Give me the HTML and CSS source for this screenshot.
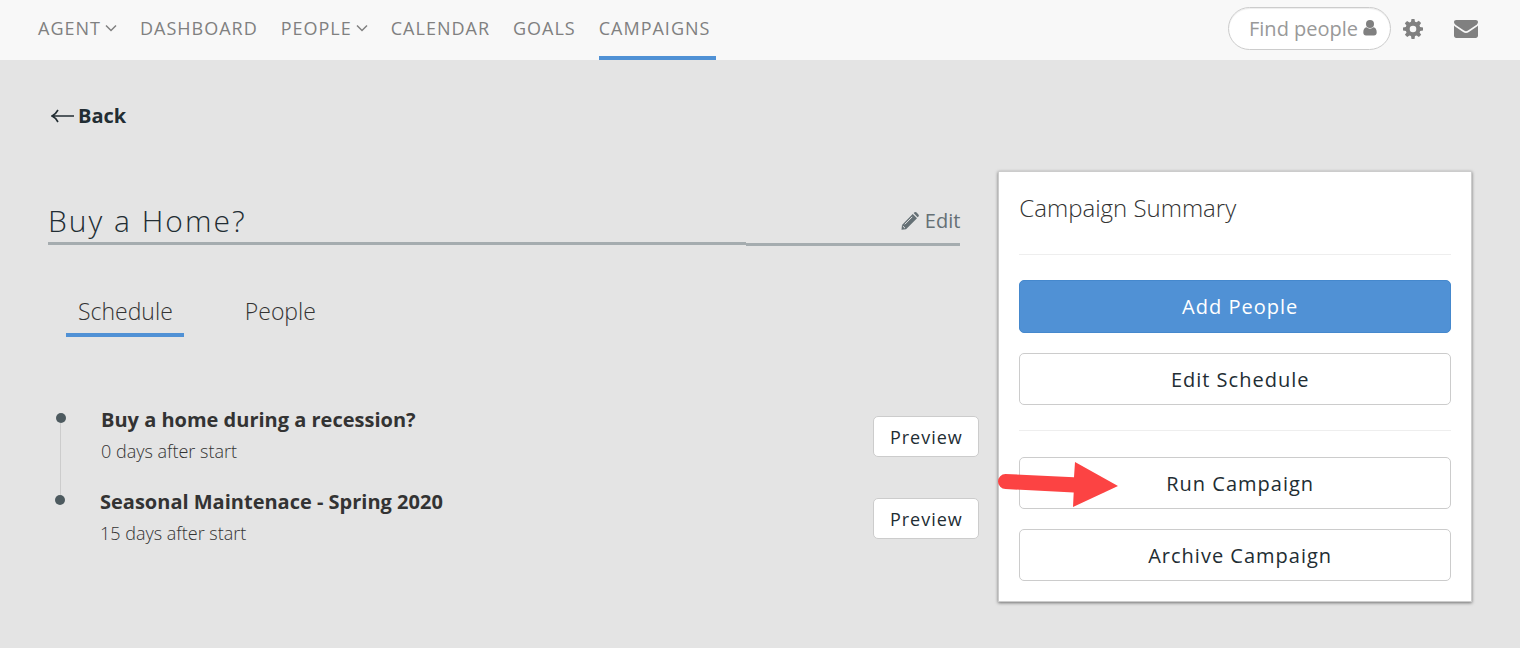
FILE: index.html
```
<!DOCTYPE html>
<html lang="en">
<head>
  <meta charset="UTF-8">
  <meta name="viewport" content="width=device-width, initial-scale=1.0">
  <title>Buy a Home? - Campaigns</title>
  <link rel="stylesheet" href="styles.css">
</head>
<body>
  <header class="navbar">
    <nav class="nav-links">
      <a href="#">AGENT
        <svg class="caret" viewBox="0 0 12 8"><path d="M1 1.5l5 5 5-5"/></svg>
      </a>
      <a href="#">DASHBOARD</a>
      <a href="#">PEOPLE
        <svg class="caret" viewBox="0 0 12 8"><path d="M1 1.5l5 5 5-5"/></svg>
      </a>
      <a href="#">CALENDAR</a>
      <a href="#">GOALS</a>
      <a href="#" class="active">CAMPAIGNS</a>
    </nav>
    <div class="nav-tools">
      <div class="search">
        <input type="text" placeholder="Find people" aria-label="Find people">
        <svg class="user-icon" viewBox="0 0 14 16"><circle cx="7" cy="4" r="4"/><path d="M3.6 7.3C1.200 7.600.3 9.800.3 12.600.3 14.600 1.400 15.600 3 15.600h8c1.600 0 2.700-1 2.700-3 0-2.800-.9-5-3.300-5.300a4.700 4.700 0 0 1-6.800 0z"/></svg>
      </div>
      <a href="#" class="gear" aria-label="Settings">
        <svg viewBox="0 0 20 20"><path fill-rule="evenodd" d="M8.500 0h3l.5 2.700 1.500.6L15.800 1.800l2.300 2.300-1.600 2.300.6 1.500 2.900.6v3l-2.800.5-.6 1.500 1.600 2.300-2.300 2.300-2.300-1.600-1.600.6-.5 2.900h-3L8 17.100l-1.500-.6-2.300 1.600-2.300-2.300 1.600-2.300-.6-1.500L0 11.500v-3l2.800-.5.6-1.600-1.600-2.200 2.300-2.300L6.500 3.400 8 2.800zM10 6.700a3.300 3.300 0 1 0 0 6.600 3.300 3.300 0 0 0 0-6.600z"/></svg>
      </a>
      <a href="#" class="mail" aria-label="Messages">
        <svg viewBox="0 0 24 18"><path d="M2.200 0h19.600C23 0 24 .8 24 1.900c0 1.300-.9 2.500-2.100 3.300L14 10.600c-1.300.9-2.700.9-4 0L2.100 5.200C.9 4.400 0 3.300 0 2 0 .8.9 0 2.200 0zM0 5.500c.4.500.9.900 1.400 1.200l7.700 5.200c1.900 1.300 3.900 1.300 5.800 0l7.700-5.200c.5-.3 1-.7 1.400-1.200v10.300c0 1.200-1 2.200-2.200 2.200H2.200C1 18 0 17 0 15.800z"/></svg>
      </a>
    </div>
  </header>

  <main>
    <a href="#" class="back">
      <svg viewBox="0 0 24 14"><path d="M7 1Q4.500 5.500 1 7q3.500 1.500 6 6M1.500 7H23"/></svg>Back
    </a>

    <div class="columns">
      <section class="campaign">
        <div class="title-row">
          <h1>Buy a Home?</h1>
          <a href="#" class="edit">
            <svg viewBox="0 0 18 18"><path d="M12.600 1l1-.7c.7-.5 1.400-.3 2 .3l1.800 1.800c.6.6.6 1.300.1 2l-.9.9zM11.700 1.900l4.300 4.300L5 17.200.5 17.700 1 12.900z"/><path class="cut" d="M3.800 12.300l7.500-7.500M1.800 14l2.200 2.200"/></svg>
            Edit
          </a>
        </div>

        <div class="tabs">
          <a href="#" class="tab active">Schedule</a>
          <a href="#" class="tab">People</a>
        </div>

        <ul class="timeline">
          <li>
            <div class="step">
              <h3>Buy a home during a recession?</h3>
              <p>0 days after start</p>
            </div>
            <button class="preview">Preview</button>
          </li>
          <li>
            <div class="step">
              <h3>Seasonal Maintenace - Spring 2020</h3>
              <p>15 days after start</p>
            </div>
            <button class="preview">Preview</button>
          </li>
        </ul>
      </section>

      <aside class="summary">
        <h2>Campaign Summary</h2>
        <hr>
        <div class="actions">
          <button class="btn primary">Add People</button>
          <button class="btn">Edit Schedule</button>
        </div>
        <hr>
        <div class="actions">
          <button class="btn">Run Campaign</button>
          <button class="btn">Archive Campaign</button>
          <svg class="arrow" viewBox="0 0 120 46"><path d="M7.500 12L76 15.200 77 0l43 24-45 21 .7-14.500L7.500 27a7.500 7.500 0 0 1 0-15z"/></svg>
        </div>
      </aside>
    </div>
  </main>
</body>
</html>
```
FILE: styles.css
```
* {
  box-sizing: border-box;
}

body {
  margin: 0;
  background-color: #e4e4e4;
  color: #333;
  font-family: "Open Sans", sans-serif;
  font-weight: 300;
}

a {
  color: inherit;
  text-decoration: none;
}

h1, h2, h3, p, ul {
  margin: 0;
  padding: 0;
}

button {
  font-family: inherit;
  font-weight: 400;
  letter-spacing: 1px;
  color: #222d33;
  background-color: white;
  border: 1px solid #ccc;
  border-radius: 5px;
  cursor: pointer;
}

/* Top bar */
.navbar {
  display: flex;
  justify-content: space-between;
  height: 60px;
  padding: 0 42px 0 38px;
  background-color: #f8f8f8;
  color: #808080;
}

.nav-links {
  display: flex;
  gap: 23px;
}

.nav-links a {
  display: flex;
  align-items: center;
  gap: 4px;
  font-size: 18px;
  font-weight: 400;
  letter-spacing: 1px;
  border-bottom: 4px solid transparent;
}

.nav-links .active {
  padding-right: 6px;
  border-color: #5091d5;
}

.caret {
  width: 12px;
  height: 8px;
  fill: none;
  stroke: #808080;
  stroke-width: 1.500;
}

.nav-tools {
  display: flex;
  align-items: center;
  padding-bottom: 3px;
  fill: #808080;
}

.nav-tools svg {
  display: block;
}

.search {
  position: relative;
}

.search input {
  width: 163px;
  height: 43px;
  padding: 0 30px 0 20px;
  font-family: inherit;
  font-size: 20px;
  border: 1px solid #ccc;
  border-radius: 22px;
  box-shadow: inset 0 1px 1px rgba(0, 0, 0, 0.075);
}

.search input::placeholder {
  color: #999;
}

.user-icon {
  position: absolute;
  right: 14px;
  top: 13px;
  width: 14px;
  height: 16px;
}

.gear {
  width: 20px;
  margin: 0 31px 0 12px;
}

.mail {
  width: 24px;
}

/* Page */
main {
  padding: 40px 48px;
}

.back {
  display: inline-flex;
  align-items: center;
  gap: 3px;
  padding-left: 3px;
  font-size: 20px;
  line-height: 32px;
  font-weight: 700;
  color: #222d33;
}

.back svg {
  width: 24px;
  height: 14px;
  fill: none;
  stroke: #222d33;
  stroke-width: 1.600;
}

.columns {
  display: grid;
  grid-template-columns: 2fr 1fr;
  align-items: start;
  margin-top: 39px;
}

.title-row {
  display: flex;
  justify-content: space-between;
  align-items: flex-end;
  margin-right: 37px;
  padding-top: 28px;
}

.title-row h1 {
  flex: 1;
  font-size: 30px;
  line-height: 43px;
  font-weight: 300;
  letter-spacing: 2px;
  color: #222d33;
  border-bottom: 3px solid #a5acaf;
  margin-bottom: 1px;
}

.edit {
  display: flex;
  align-items: center;
  justify-content: flex-end;
  gap: 6px;
  width: 214px;
  padding-bottom: 6px;
  font-size: 20px;
  line-height: 32px;
  font-weight: 400;
  color: #657075;
  border-bottom: 3px solid #a5acaf;
}

.edit svg {
  width: 18px;
  height: 18px;
  fill: #657075;
}

.edit .cut {
  fill: none;
  stroke: #e4e4e4;
}

.tabs {
  display: flex;
  gap: 49px;
  margin: 43px 18px 0;
}

.tab {
  padding: 0 11px 0 12px;
  font-size: 23px;
  line-height: 44px;
  border-bottom: 4px solid transparent;
}

.tab.active {
  border-color: #5091d5;
}

.timeline {
  margin: 68px 18px 0 12px;
  list-style: none;
}

.timeline li {
  position: relative;
  display: flex;
  justify-content: space-between;
  align-items: flex-start;
  height: 82px;
  padding-left: 40px;
}

.timeline li::before {
  content: "";
  position: absolute;
  left: -5px;
  top: 8px;
  width: 10px;
  height: 10px;
  border-radius: 50%;
  background-color: #4d5a5f;
}

/* line down to the next step */
.timeline li:not(:last-child)::after {
  content: "";
  position: absolute;
  left: -1px;
  top: 18px;
  width: 1px;
  height: 72px;
  background-color: #ccc;
}

.timeline li:not(:last-child) {
  border-left: 1px solid transparent;
}

.step h3 {
  font-size: 20px;
  line-height: 30px;
  font-weight: 700;
}

.step p {
  font-size: 18px;
  line-height: 32px;
}

.preview {
  width: 106px;
  height: 41px;
  margin-top: 11px;
  padding: 0;
  font-size: 18px;
}

/* Summary card */
.summary {
  margin-left: 1px;
  padding: 20px;
  background-color: white;
  border: 1px solid #ccc;
  box-shadow: 0 1px 3px rgba(0, 0, 0, 0.5);
}

.summary h2 {
  font-size: 24px;
  line-height: 32px;
  font-weight: 300;
}

.summary hr {
  margin: 25px 0 26px;
  border: 0;
  border-top: 1px solid #eee;
}

.summary h2 + hr {
  margin: 30px 0 25px;
}

.actions {
  position: relative;
  display: flex;
  flex-direction: column;
  gap: 20px;
}

.btn {
  height: 52px;
  padding: 0 0 0 10px;
  font-size: 20px;
}

.primary {
  height: 53px;
  color: white;
  background-color: #5091d5;
  border-color: #4588cd;
}

.arrow {
  position: absolute;
  left: -21px;
  top: 5px;
  width: 120px;
  height: 46px;
  fill: #fc4343;
}
```
